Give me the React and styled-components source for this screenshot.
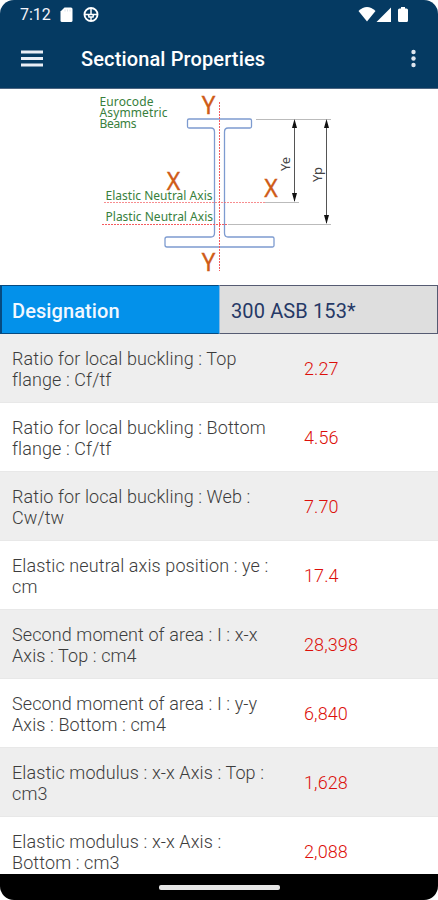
import React from 'react'
import styled, { createGlobalStyle } from 'styled-components';

const GlobalStyle = createGlobalStyle`
    body {
        margin: 0;
        background: white;
        font-family: Roboto, "Liberation Sans", sans-serif;
    }
`
const Screen = styled.div`
    box-sizing: border-box;
    display: flex;
    flex-direction: column;
    width: 438px;
    height: 900px;
    border-radius: 14px;
    overflow: hidden;
    background: white;
`
const StatusBar = styled.div`
    display: flex;
    align-items: center;
    flex: none;
    height: 29px;
    padding: 0 29px 0 20px;
    background: #053a62;
    color: #f4f4fa;
`
const Clock = styled.span`
    width: 39px;
    font-size: 16px;
    line-height: 28px;
`
const Spacer = styled.div`
    flex: 1;
`
const StatusIcon = styled.svg`
    display: block;
    flex: none;
    margin-left: ${props => props.$gap || 0}px;
`
const Toolbar = styled.header`
    display: flex;
    align-items: center;
    box-sizing: border-box;
    flex: none;
    height: 60px;
    padding: 0 22px 0 21px;
    background: #053a62;
    border-bottom: 1px solid #4c6480;
`
const Title = styled.h1`
    flex: 1;
    margin: 1px 0 0 38px;
    font-size: 20px;
    line-height: 24px;
    font-weight: 500;
    letter-spacing: 0.13px;
    color: white;
`
const Diagram = styled.svg`
    display: block;
    flex: none;
    width: 438px;
    height: 196px;
    font-family: "Noto Sans", "Open Sans", sans-serif;
`
const HeaderRow = styled.div`
    display: flex;
    flex: none;
    height: 49px;
`
const HeaderCell = styled.div`
    box-sizing: border-box;
    width: 219px;
    padding-left: ${props => props.$main ? 10 : 11}px;
    border: 1px solid ${props => props.$main ? '#064a80' : '#555b72'};
    border-left: ${props => props.$main ? '2px solid #064a80' : '1px solid #86b9e3'};
    border-right-color: ${props => props.$main ? '#0391ea' : '#555b72'};
    background: ${props => props.$main ? '#0391ea' : '#dedede'};
    color: ${props => props.$main ? '#f2f8ff' : '#263966'};
    font-size: 20px;
    font-weight: ${props => props.$main ? 500 : 400};
    line-height: 50px;
    letter-spacing: ${props => props.$main ? 0.1 : 0.12}px;
`
const Rows = styled.div`
    flex: 1;
    min-height: 0;
    overflow: hidden;
`
const Row = styled.div`
    display: flex;
    align-items: center;
    box-sizing: border-box;
    height: 69px;
    border-bottom: 1px solid #e8e8e8;
    background: ${props => props.$shaded ? '#eeeeee' : 'white'};
`
const Label = styled.div`
    width: 292px;
    padding: 2px 0 0 12px;
    box-sizing: border-box;
    font-size: 18px;
    line-height: 21px;
    font-weight: 300;
    letter-spacing: 0.1px;
    color: #3c3c3c;
    white-space: pre-line;
`
const Value = styled.div`
    padding: 1px 0 0 12px;
    font-size: 18px;
    line-height: 21px;
    font-weight: 300;
    letter-spacing: 0.1px;
    color: #dc0f0a;
`
const NavBar = styled.div`
    display: flex;
    justify-content: center;
    box-sizing: border-box;
    flex: none;
    height: 26px;
    padding-top: 11px;
    background: black;
`
const Handle = styled.div`
    width: 121px;
    height: 5px;
    border-radius: 2px;
    background: #e6e6e6;
`

const properties = [
    { name: 'Ratio for local buckling : Top\nflange : Cf/tf', value: '2.27' },
    { name: 'Ratio for local buckling : Bottom\nflange : Cf/tf', value: '4.56' },
    { name: 'Ratio for local buckling : Web :\nCw/tw', value: '7.70' },
    { name: 'Elastic neutral axis position : ye :\ncm', value: '17.4' },
    { name: 'Second moment of area : I : x-x\nAxis : Top : cm4', value: '28,398' },
    { name: 'Second moment of area : I : y-y\nAxis : Bottom : cm4', value: '6,840' },
    { name: 'Elastic modulus : x-x Axis : Top :\ncm3', value: '1,628' },
    { name: 'Elastic modulus : x-x Axis :\nBottom : cm3', value: '2,088' },
]

const PhoneStatus = () => (
    <StatusBar>
        <Clock>7:12</Clock>
        <StatusIcon $gap={1} width="13" height="16" viewBox="0 0 13 16">
            <path d="M4.5 .5H11Q12.500 .5 12.500 2V13.500Q12.500 15 11 15H2Q.5 15 .5 13.500V4.500Z" fill="#fff" />
            <path d="M5 2.500v2M7.500 2.500v2M10 2.500v2" stroke="#d3dae3" strokeWidth="0.800" />
        </StatusIcon>
        <StatusIcon $gap={10} width="16" height="16" viewBox="0 0 16 16" fill="none" stroke="#fff">
            <circle cx="8" cy="7.500" r="6.500" strokeWidth="1.900" />
            <path d="M1.500 7.500H14.500M5.500 7.500L6 10H10L10.500 7.500M8 10V14M8 1.500V7.500" strokeWidth="1.500" />
        </StatusIcon>
        <Spacer />
        <StatusIcon width="18" height="16" viewBox="0 0 18 16">
            <path d="M.5 4Q9-4 17.500 4L9 14.500Z" fill="#fff" />
        </StatusIcon>
        <StatusIcon width="16" height="16" viewBox="0 0 16 16">
            <path d="M15 .5V15H.5Z" fill="#fff" />
        </StatusIcon>
        <StatusIcon $gap={5} width="12" height="16" viewBox="0 0 12 16">
            <path d="M4 0H8V1.500H9.500Q11 1.500 11 3V13.500Q11 15 9.500 15H2.500Q1 15 1 13.500V3Q1 1.500 2.500 1.500H4Z" fill="#fff" />
        </StatusIcon>
    </StatusBar>
)

const BeamDiagram = () => (
    <Diagram viewBox="0 89 438 196">
        <g fill="#38803c" fontSize="12">
            <text x="99.500" y="106" textLength="54">Eurocode</text>
            <text x="99.500" y="117" textLength="68">Asymmetric</text>
            <text x="99.500" y="128" textLength="37">Beams</text>
            <text x="105.500" y="200" textLength="107">Elastic Neutral Axis</text>
            <text x="105.500" y="221" textLength="107.500">Plastic Neutral Axis</text>
        </g>
        <path
            d="M189 119H250Q251.500 119 251.500 120.500V126.500Q251.500 128 250 128H228Q224.500 128 224.500 132V233Q224.500 237 228 237H272.500Q274 237 274 238.500V245.500Q274 247 272.500 247H167Q165 247 165 245V239Q165 237 167 237H211Q214.500 237 214.500 233V132Q214.500 128 211 128H189Q187.500 128 187.500 126.500V120.500Q187.500 119 189 119Z"
            fill="none" stroke="#7d9bd0" strokeWidth="1.300"
        />
        <g fill="none" stroke="#f45c5f" strokeDasharray="2 1">
            <path d="M219.500 102V271" />
            <path d="M104 202.500H266" strokeWidth="0.700" />
            <path d="M102 224.500H228" />
        </g>
        <g stroke="#aaa" strokeWidth="0.800">
            <path d="M256 119.500H331M265 202.500H299M228 224.500H331" />
        </g>
        <g stroke="#555" fill="#111">
            <path d="M294.500 121V201M326.500 121V223" />
            <path d="M294.500 119L297 128H292ZM326.500 119L329 128H324ZM294.500 202L297 193H292ZM326.500 224L329 215H324Z" stroke="none" />
        </g>
        <g fill="#cf5b17" stroke="#cf5b17" strokeWidth="0.400" fontSize="25" textAnchor="middle">
            <text x="208.500" y="114" textLength="13.500" lengthAdjust="spacingAndGlyphs">Y</text>
            <text x="208.500" y="271" textLength="13.500" lengthAdjust="spacingAndGlyphs">Y</text>
            <text x="173.500" y="189.500" textLength="13.500" lengthAdjust="spacingAndGlyphs">X</text>
            <text x="271" y="197" textLength="13.500" lengthAdjust="spacingAndGlyphs">X</text>
        </g>
        <g fill="#444" fontSize="13">
            <text transform="translate(290 171) rotate(-90)">Ye</text>
            <text transform="translate(322 182) rotate(-90)">Yp</text>
        </g>
    </Diagram>
)

const App = () => {
    return (
        <Screen>
            <GlobalStyle />
            <PhoneStatus />
            <Toolbar>
                <svg width="22" height="18" viewBox="0 0 22 18" stroke="#e9edf5" strokeWidth="3">
                    <path d="M0 2H22M0 8.500H22M0 15H22" />
                </svg>
                <Title>Sectional Properties</Title>
                <svg width="6" height="20" viewBox="0 0 6 20" fill="#dfe5ee">
                    <circle cx="3.500" cy="3" r="2.200" />
                    <circle cx="3.500" cy="9.500" r="2.200" />
                    <circle cx="3.500" cy="16" r="2.200" />
                </svg>
            </Toolbar>
            <BeamDiagram />
            <HeaderRow>
                <HeaderCell $main>Designation</HeaderCell>
                <HeaderCell>300 ASB 153*</HeaderCell>
            </HeaderRow>
            <Rows>
                {properties.map((p, i) => (
                    <Row key={p.name} $shaded={i % 2 === 0}>
                        <Label>{p.name}</Label>
                        <Value>{p.value}</Value>
                    </Row>
                ))}
            </Rows>
            <NavBar>
                <Handle />
            </NavBar>
        </Screen>
    )
}

export default App
